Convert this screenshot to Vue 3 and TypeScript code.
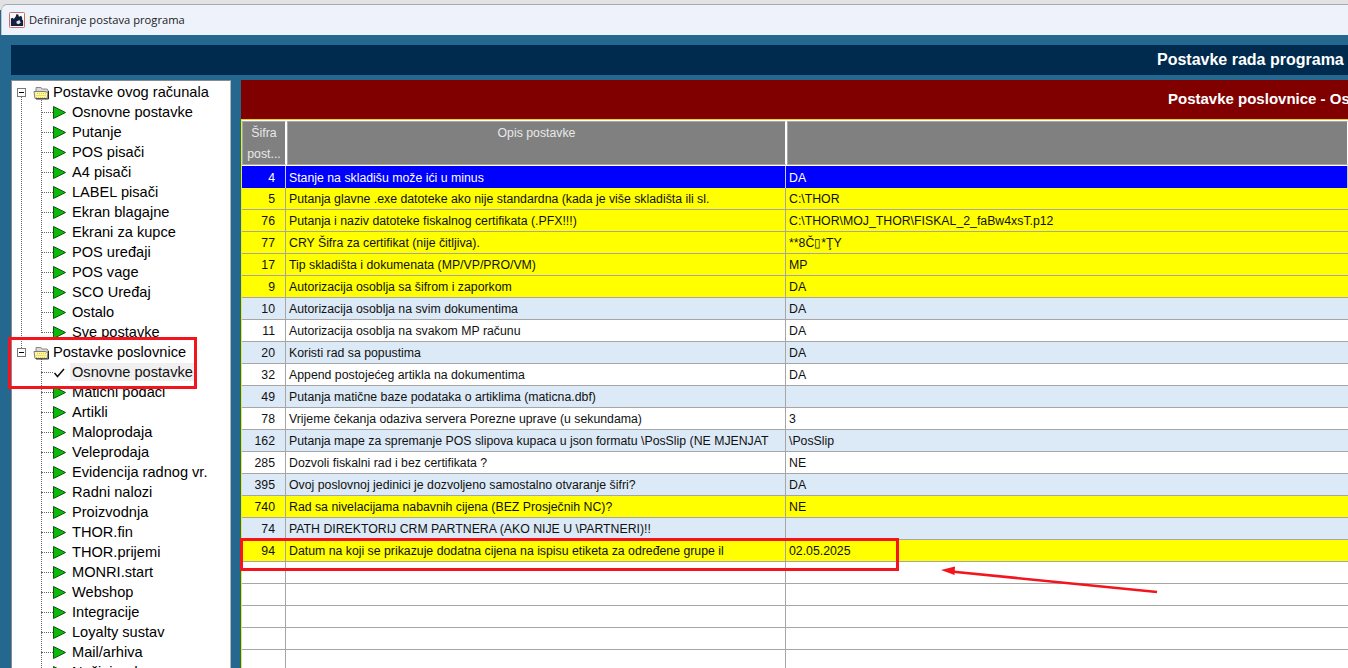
<script setup lang="ts">
interface TreeItem { label: string; kind: 'root' | 'leaf' | 'checked' }
const leaves = (names: string[]): TreeItem[] => names.map((label) => ({ label, kind: 'leaf' }))
const tree: TreeItem[] = [
  { label: 'Postavke ovog računala', kind: 'root' },
  ...leaves(['Osnovne postavke', 'Putanje', 'POS pisači', 'A4 pisači', 'LABEL pisači', 'Ekran blagajne', 'Ekrani za kupce', 'POS uređaji', 'POS vage', 'SCO Uređaj', 'Ostalo', 'Sve postavke']),
  { label: 'Postavke poslovnice', kind: 'root' },
  { label: 'Osnovne postavke', kind: 'checked' },
  ...leaves(['Matični podaci', 'Artikli', 'Maloprodaja', 'Veleprodaja', 'Evidencija radnog vr.', 'Radni nalozi', 'Proizvodnja', 'THOR.fin', 'THOR.prijemi', 'MONRI.start', 'Webshop', 'Integracije', 'Loyalty sustav', 'Mail/arhiva', 'Načini rada']),
]
interface Row { code: string; name: string; value: string; tone: 'active' | 'yellow' | 'blue' | 'white' }
const rows: Row[] = [
  { code: '4', name: 'Stanje na skladišu može ići u minus', value: 'DA', tone: 'active' },
  { code: '5', name: 'Putanja glavne .exe datoteke ako nije standardna (kada je više skladišta ili sl.', value: 'C:\\THOR', tone: 'yellow' },
  { code: '76', name: 'Putanja i naziv datoteke fiskalnog certifikata (.PFX!!!)', value: 'C:\\THOR\\MOJ_THOR\\FISKAL_2_faBw4xsT.p12', tone: 'yellow' },
  { code: '77', name: 'CRY Šifra za certifikat (nije čitljiva).', value: '**8Č▯*ŢY', tone: 'yellow' },
  { code: '17', name: 'Tip skladišta i dokumenata (MP/VP/PRO/VM)', value: 'MP', tone: 'yellow' },
  { code: '9', name: 'Autorizacija osoblja sa šifrom i zaporkom', value: 'DA', tone: 'yellow' },
  { code: '10', name: 'Autorizacija osoblja na svim dokumentima', value: 'DA', tone: 'blue' },
  { code: '11', name: 'Autorizacija osoblja na svakom MP računu', value: 'DA', tone: 'white' },
  { code: '20', name: 'Koristi rad sa popustima', value: 'DA', tone: 'blue' },
  { code: '32', name: 'Append postojećeg artikla na dokumentima', value: 'DA', tone: 'white' },
  { code: '49', name: 'Putanja matične baze podataka o artiklima (maticna.dbf)', value: '', tone: 'blue' },
  { code: '78', name: 'Vrijeme čekanja odaziva servera Porezne uprave (u sekundama)', value: '3', tone: 'white' },
  { code: '162', name: 'Putanja mape za spremanje POS slipova kupaca u json formatu \\PosSlip (NE MJENJAT', value: '\\PosSlip', tone: 'blue' },
  { code: '285', name: 'Dozvoli fiskalni rad i bez certifikata ?', value: 'NE', tone: 'white' },
  { code: '395', name: 'Ovoj poslovnoj jedinici je dozvoljeno samostalno otvaranje šifri?', value: 'DA', tone: 'blue' },
  { code: '740', name: 'Rad sa nivelacijama nabavnih cijena (BEZ Prosječnih NC)?', value: 'NE', tone: 'yellow' },
  { code: '74', name: 'PATH DIREKTORIJ CRM PARTNERA (AKO NIJE U \\PARTNERI)!!', value: '', tone: 'blue' },
  { code: '94', name: 'Datum na koji se prikazuje dodatna cijena na ispisu etiketa za određene grupe il', value: '02.05.2025', tone: 'yellow' },
  { code: '', name: '', value: '', tone: 'white' },
  { code: '', name: '', value: '', tone: 'white' },
  { code: '', name: '', value: '', tone: 'white' },
  { code: '', name: '', value: '', tone: 'white' },
  { code: '', name: '', value: '', tone: 'white' },
]
</script>

<template>
  <div class="screen">
    <div class="backdrop"></div>
    <div class="titlebar">
      <svg class="appicon" width="16" height="16" viewBox="0 0 17 17">
        <rect x="0.5" y="0.5" width="16" height="16" rx="1" fill="#fff" stroke="#c9605c" />
        <path d="M2 15V7l2-1 1 1.500L7 5l1-3 2 1 .5 2L13 4l1 2v2l1 1v6z" fill="#13233f" />
        <path d="M8 10l3-1.500 1.500 3L10 13l-2-1z" fill="#dfe5ec" />
      </svg>
      <span>Definiranje postava programa</span>
    </div>
    <div class="workspace">
      <div class="mainhead">Postavke rada programa</div>
      <div class="panes">
        <aside class="tree">
          <div class="trunk rootline"></div>
          <div class="trunk firstgroup"></div>
          <div class="trunk secondgroup"></div>
          <div v-for="(item, i) in tree" :key="i" class="node" :class="item.kind">
            <template v-if="item.kind === 'root'">
              <span class="expander"></span>
              <svg class="folder" width="20" height="15" viewBox="0 0 20 15">
                <path d="M6 2.500h5l1 1.500h5l1 1v8H6z" fill="#d8d8d8" stroke="#8a8a8a" />
                <path d="M4 6.500h11l3 1-1 6H5z" fill="#fbf6a8" stroke="#7d7d7d" />
                <path d="M7 8.500h9M6.500 10.500h9.500M6 12.500h10" stroke="#e2c92c" stroke-dasharray="1 1" />
                <path d="M18.500 6v8H6" fill="none" stroke="#2a2a2a" />
              </svg>
            </template>
            <template v-else>
              <span class="branch"></span>
              <svg v-if="item.kind === 'leaf'" class="arrow" width="13" height="13" viewBox="0 0 13 13">
                <path d="M.500.500 12.500 6.500 .500 12.500z" fill="#0cb80c" stroke="#0a5a0a" />
              </svg>
              <svg v-else class="arrow" width="13" height="13" viewBox="0 0 13 13">
                <path d="M1.500 7 4.500 10.500 11 3" fill="none" stroke="#111" stroke-width="1.500" />
              </svg>
            </template>
            <span class="label">{{ item.label }}</span>
          </div>
        </aside>
        <section class="gridpane">
          <div class="gridtitle">Postavke poslovnice - Osnovne postavke</div>
          <div class="grid">
            <div class="headrow">
              <div class="hcell code">Šifra<br />post...</div>
              <div class="hcell name">Opis postavke</div>
              <div class="hcell value"></div>
            </div>
            <div v-for="(row, i) in rows" :key="i" class="row" :class="row.tone">
              <div class="cell code">{{ row.code }}</div>
              <div class="cell name">{{ row.name }}</div>
              <div class="cell value">{{ row.value }}</div>
            </div>
          </div>
        </section>
      </div>
    </div>
    <div class="mark markTree"></div>
    <div class="mark markRow"></div>
    <svg class="pointer" width="230" height="40" viewBox="0 0 230 40">
      <path d="M216 31 10 10.500" stroke="#f3141d" stroke-width="2.600" fill="none" />
      <path d="M0 9 14 5.500 13.500 14z" fill="#f3141d" />
    </svg>
  </div>
</template>

<style>
html, body { margin: 0; overflow: hidden; background: #25688f; }
</style>

<style scoped>
.screen {
  position: relative;
  width: 1348px;
  height: 668px;
  overflow: hidden;
  display: flex;
  flex-direction: column;
  background: #25688f;
  font-family: "Liberation Sans", Arial, sans-serif;
}
.backdrop { position: absolute; left: 0; top: 0; width: 100%; height: 10px; background: #e2e2e2; }
.titlebar {
  position: relative;
  box-sizing: border-box;
  height: 31px;
  flex: none;
  margin-top: 4px;
  margin-left: 1px;
  display: flex;
  align-items: center;
  gap: 4px;
  padding-left: 7px;
  padding-bottom: 1px;
  background: #eef2fa;
  border-top: 1px solid #a8a8a8;
  border-left: 1px solid #c4c4c4;
  border-top-left-radius: 6px;
  font-family: "Open Sans", "Noto Sans", sans-serif;
  font-size: 11.2px;
  color: #1a1a1a;
}
.appicon { flex: none; }
.workspace { position: relative; flex: 1; min-height: 0; display: flex; flex-direction: column; padding: 10px 0 0 11px; }
.mainhead {
  height: 30px;
  flex: none;
  box-sizing: border-box;
  padding-left: 1146px;
  background: #002b4f;
  color: #fff;
  font-size: 16px;
  font-weight: bold;
  line-height: 30px;
  white-space: nowrap;
  overflow: hidden;
}
.panes { flex: 1; min-height: 0; display: flex; gap: 10px; padding-top: 5px; }
.tree {
  position: relative;
  width: 220px;
  flex: none;
  box-sizing: border-box;
  padding-top: 1px;
  background: #fff;
  border-top: 1px solid #8a8a8a;
  border-left: 1px solid #8a8a8a;
  border-right: 1px solid #b5b5b5;
  overflow: hidden;
  font-size: 14.6px;
  color: #000;
}
.trunk { position: absolute; border-left: 1px dotted #666; }
.rootline { left: 9px; top: 16px; height: 251px; }
.firstgroup { left: 29px; top: 19px; height: 233px; }
.secondgroup { left: 29px; top: 277px; height: 320px; }
.node { position: relative; height: 20px; display: flex; align-items: center; white-space: nowrap; }
.node.root { padding-left: 5px; }
.node.leaf, .node.checked { padding-left: 29px; }
.expander {
  position: relative;
  box-sizing: border-box;
  width: 9px;
  height: 9px;
  flex: none;
  border: 1px solid #777;
  background: #fff;
}
.expander::after { content: ""; position: absolute; left: 1px; right: 1px; top: 3px; height: 1px; background: #000; }
.folder { flex: none; margin-left: 4px; }
.root .label { margin-left: 3px; }
.branch { width: 12px; flex: none; border-top: 1px dotted #666; }
.arrow { flex: none; }
.leaf .label { margin-left: 6px; }
.checked .label { background: #f0f0f0; margin-left: 4px; padding: 1px 2px; color: #111; }
.gridpane { flex: 1; min-width: 0; display: flex; flex-direction: column; }
.gridtitle {
  height: 39px;
  flex: none;
  box-sizing: border-box;
  padding-left: 927px;
  background: #800000;
  color: #fff;
  font-size: 15px;
  font-weight: bold;
  line-height: 38px;
  white-space: nowrap;
  overflow: hidden;
}
.grid { flex: 1; min-height: 0; border-top: 1px solid #e8d300; border-left: 1px solid #f2ee00; overflow: hidden; background: #fff; }
.headrow { display: flex; height: 46px; box-sizing: border-box; padding-top: 1px; background: #fff; }
.hcell {
  box-sizing: border-box;
  height: 44px;
  padding-top: 1px;
  background: #808080;
  color: #e8e8e8;
  font-size: 12.3px;
  line-height: 21px;
  text-align: center;
  border: 1px solid #a8a8a8;
  border-right-color: #fff;
}
.hcell.code { width: 44px; }
.hcell.name { width: 499px; margin-left: 1px; }
.hcell.value { flex: 1; margin-left: 1px; }
.row { display: flex; height: 22px; box-sizing: border-box; font-size: 12.3px; line-height: 22px; color: #111; border-bottom: 1px solid #a6a6a6; }
.row.active { background: #0000ff; color: #fff; border-bottom: 0; line-height: 24px; }
.row.yellow { background: #ffff00; }
.row.blue { background: #dce9f6; }
.row.white { background: #fff; }
.cell { box-sizing: border-box; white-space: nowrap; overflow: hidden; border-right: 1px solid #a6a6a6; }
.row.active .cell { border-right: 1px solid #c8c8ff; }
.cell.code { width: 44px; padding-right: 10px; text-align: right; }
.cell.name { width: 500px; padding-left: 3px; }
.cell.value { flex: 1; padding-left: 3px; border-right: 0; }
.mark { position: absolute; box-sizing: border-box; border: 3px solid #f3141d; pointer-events: none; }
.markTree { left: 8px; top: 337px; width: 189px; height: 52px; }
.markRow { left: 240px; top: 538px; width: 659px; height: 33px; }
.pointer { position: absolute; left: 941px; top: 561px; }
</style>
